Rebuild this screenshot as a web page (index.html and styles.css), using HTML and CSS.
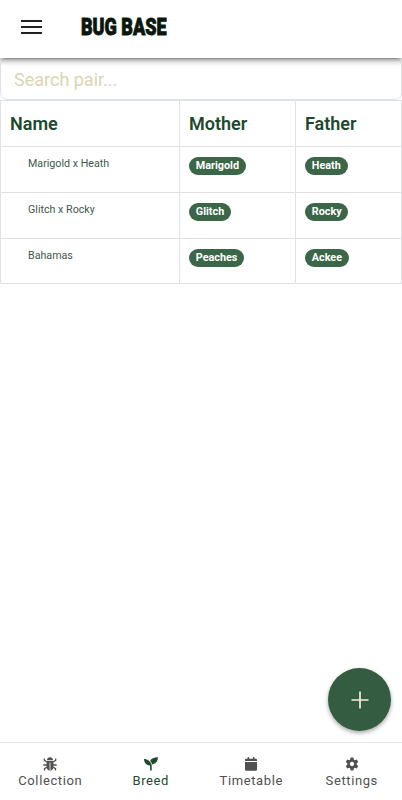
FILE: index.html
```html
<!DOCTYPE html>
<html lang="en">
<head>
  <meta charset="UTF-8">
  <meta name="viewport" content="width=device-width, initial-scale=1.0">
  <title>Breed - Bug Base</title>
  <link rel="stylesheet" href="styles.css">
</head>
<body>
  <header class="top-bar">
    <button class="menu-button" aria-label="Open menu">
      <span></span><span></span><span></span>
    </button>
    <div class="logo"><span>BUG BASE</span></div>
  </header>

  <main>
    <input class="search" type="text" placeholder="Search pair...">
    <table class="pairs">
      <thead>
        <tr><th class="col-name">Name</th><th class="col-mother">Mother</th><th>Father</th></tr>
      </thead>
      <tbody>
        <tr>
          <td class="pair-name">Marigold x Heath</td>
          <td><span class="badge">Marigold</span></td>
          <td><span class="badge">Heath</span></td>
        </tr>
        <tr>
          <td class="pair-name">Glitch x Rocky</td>
          <td><span class="badge">Glitch</span></td>
          <td><span class="badge">Rocky</span></td>
        </tr>
        <tr>
          <td class="pair-name">Bahamas</td>
          <td><span class="badge">Peaches</span></td>
          <td><span class="badge">Ackee</span></td>
        </tr>
      </tbody>
    </table>
  </main>

  <button class="add-button" aria-label="Add pair">
    <svg width="18" height="18" viewBox="0 0 18 18"><path d="M9 .5v17M.5 9h17" stroke="currentColor" stroke-width="1.7"/></svg>
  </button>

  <nav class="bottom-nav">
    <a href="#">
      <svg viewBox="0 0 14 14" fill="currentColor">
        <path d="M4 3.2C4 1.2 5.300 .2 7 .2s3 1 3 3zM3.600 4h6.800v6c0 2-1.400 3.500-3 3.800V5.600h-.8v8.200c-1.600-.3-3-1.800-3-3.800z"/>
        <path d="M4 5 1.300 3.300V1.600M10 5l2.700-1.700V1.600M4 8H.3M10 8h3.700M4 10l-2.500 1.600v2M10 10l2.500 1.600v2" fill="none" stroke="currentColor" stroke-width="1.300"/>
      </svg>
      <span>Collection</span>
    </a>
    <a href="#" class="active">
      <svg viewBox="0 0 14 14" fill="currentColor">
        <path d="M0 2.100c3.900 0 7 2.800 7.700 6v5q0 .7-.8.700t-.8-.7V8.600C2.700 8.600 0 5.900 0 2.100z"/>
        <path d="M14 .3c0 3.800-2.300 6.600-5.900 7.100-.3-1.500-1-2.700-2-3.700C7.400 1.600 10 .3 14 .3z"/>
      </svg>
      <span>Breed</span>
    </a>
    <a href="#">
      <svg viewBox="0 0 14 14" fill="currentColor">
        <path d="M1 4V2.800q0-1 1-1h1.500V.7q0-.6.600-.6h.5q.6 0 .6.600v1.100h3.600V.7q0-.6.600-.6h.5q.6 0 .6.600v1.100H12q1 0 1 1V4zM1 5h12v7.700q0 1-1 1H2q-1 0-1-1z"/>
      </svg>
      <span>Timetable</span>
    </a>
    <a href="#">
      <svg viewBox="0 0 24 24" fill="currentColor">
        <path fill-rule="evenodd" d="M9.500 1h5l.6 3.300 1.900 1.100 3.200-1.200 2.500 4.300-2.600 2.200v2.600l2.600 2.200-2.500 4.300-3.200-1.200-1.900 1.100-.6 3.300h-5l-.6-3.300L7 18.600l-3.200 1.200-2.500-4.300 2.600-2.200v-2.600L1.300 8.500l2.500-4.300L7 5.400l1.900-1.100zM12 8.300a3.700 3.700 0 1 0 0 7.400 3.700 3.700 0 0 0 0-7.400z"/>
      </svg>
      <span>Settings</span>
    </a>
  </nav>
</body>
</html>
```
FILE: styles.css
```css
:root {
  --primary-color: #1d4a2d;
  --badge-color: #3b6648;
  --button-color: #345c41;
  --border-color: #dee2e6;
}

* {
  box-sizing: border-box;
}

body {
  display: flex;
  flex-direction: column;
  height: 100vh;
  margin: 0;
  font-family: Roboto, sans-serif;
  color: var(--primary-color);
  background-color: #fff;
}

button {
  padding: 0;
  border: none;
  background: none;
  cursor: pointer;
}

.top-bar {
  position: relative;
  z-index: 1;
  display: flex;
  align-items: center;
  flex: none;
  height: 58px;
  padding: 0 21px 4px;
  background-color: #fff;
  box-shadow: 0 1px 7px rgba(0, 0, 0, 0.65);
}

.menu-button {
  display: flex;
  flex-direction: column;
  gap: 4px;
  width: 21px;
}

.menu-button span {
  height: 2px;
  background-color: #222;
}

.logo {
  width: 88px;
  margin-left: 39px;
  color: #0b170d;
  font-size: 24px;
  font-weight: 900;
  line-height: 28px;
  white-space: nowrap;
}

.logo span {
  display: inline-block;
  transform: scaleX(0.75);
  transform-origin: left;
  -webkit-text-stroke: 0.9px #0b170d;
}

main {
  flex: 1;
}

.search {
  display: block;
  width: 100%;
  height: 42px;
  padding: 0 13px;
  border: 1px solid var(--border-color);
  border-radius: 7px;
  font: 400 18px Roboto, sans-serif;
}

.search::placeholder {
  color: #dbd4b4;
}

.pairs {
  width: 100%;
  table-layout: fixed;
  border-collapse: collapse;
}

.col-name {
  width: 179px;
}

.col-mother {
  width: 116px;
}

th,
td {
  height: 46px;
  padding: 0 9px;
  border: 1px solid var(--border-color);
  text-align: left;
}

th {
  font-size: 18px;
  font-weight: 600;
}

tbody tr:last-child td {
  height: 45px;
}

td {
  padding-top: 10px;
  vertical-align: top;
  line-height: 18px;
}

td.pair-name {
  padding: 8px 0 0 27px;
  color: #3e594a;
  font-size: 10.7px;
}

.badge {
  display: block;
  width: fit-content;
  height: 18px;
  padding: 0 6.8px;
  border-radius: 9px;
  background-color: var(--badge-color);
  color: #fff;
  font-size: 10.8px;
  font-weight: 700;
}

.add-button {
  position: fixed;
  right: 11px;
  bottom: 69px;
  display: flex;
  align-items: center;
  justify-content: center;
  width: 63px;
  height: 63px;
  border-radius: 50%;
  background-color: var(--button-color);
  color: #f3efdc;
  box-shadow: 0 2px 4px rgba(0, 0, 0, 0.35);
}

.bottom-nav {
  display: grid;
  grid-template-columns: repeat(4, 1fr);
  flex: none;
  height: 58px;
  border-top: 1px solid #e6e6e6;
}

.bottom-nav a {
  display: flex;
  flex-direction: column;
  align-items: center;
  padding-top: 14px;
  color: #505050;
  font-size: 13px;
  line-height: 18px;
  letter-spacing: 0.6px;
  text-decoration: none;
}

.bottom-nav a.active {
  color: var(--primary-color);
}

.bottom-nav svg {
  width: 14px;
  height: 14px;
  margin-bottom: 1px;
}
```
